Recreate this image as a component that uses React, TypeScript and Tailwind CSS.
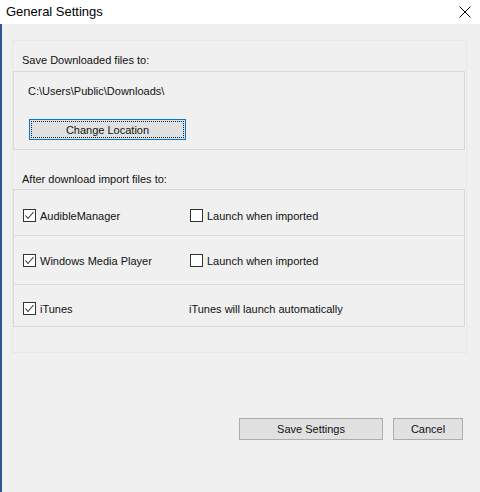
import React from "react";

function Check({ checked }: { checked: boolean }) {
  return (
    <div className="w-[13px] h-[13px] border border-[#333333] bg-white flex items-center justify-center shrink-0">
      {checked && (
        <svg width="11" height="11" viewBox="0 0 11 11">
          <polyline points="1.5,5.5 4,8.5 9.5,2" fill="none" stroke="#333333" strokeWidth="1.1" />
        </svg>
      )}
    </div>
  );
}

function Row({ pt, h, name, checked, right, last }: { pt: string; h: string; name: string; checked: boolean; right: React.ReactNode; last?: boolean }) {
  return (
    <div className={`${h} ${pt} ${last ? "" : "border-b border-[#dcdcdc]"} flex`}>
      <div className="flex items-center h-[13px] pl-[9px] w-[176px]">
        <Check checked={checked} />
        <span className="ml-[4px] leading-[16px]">{name}</span>
      </div>
      <div className="flex items-center h-[13px]">{right}</div>
    </div>
  );
}

export default function App() {
  return (
    <div
      className="w-[480px] h-[492px] flex flex-col text-[11px] text-[#111111] overflow-hidden"
      style={{ fontFamily: '"Liberation Sans", Arial, sans-serif' }}
    >
      <div className="h-[24px] bg-white flex items-center justify-between pl-[6px] pr-[9px] shrink-0">
        <span className="text-[13px] leading-[20px] text-black">General Settings</span>
        <svg width="12" height="12" viewBox="0 0 12 12">
          <path d="M0.5 0.5 L11.5 11.5 M11.5 0.5 L0.5 11.5" stroke="#000" strokeWidth="1" />
        </svg>
      </div>
      <div className="flex-1 bg-[#f0f0f0] border-l-2 border-[#2b5797] pl-[10px] pr-[16px] pt-[16px]">
        <div className="w-[455px] border border-[#e8e8e8] pr-[1px] pb-[25px]">
          <div className="pt-[11px] pl-[9px] h-[27px] leading-[16px]">Save Downloaded files to:</div>
          <div className="mt-[3px] h-[79px] border border-[#dadada] pl-[14px] pt-[11px]">
            <div className="leading-[16px]">C:\Users\Public\Downloads\</div>
            <div className="mt-[20px] ml-[1px] w-[157px] h-[21px] border border-[#0078d7] bg-[#e1e1e1] p-[1px]">
              <div className="w-full h-full border border-dotted border-[#222222] flex items-center justify-center leading-[16px]">
                Change Location
              </div>
            </div>
          </div>
          <div className="mt-[21px] pl-[9px] h-[16px] leading-[16px]">After download import files to:</div>
          <div className="mt-[2px] border border-[#dadada]">
            <Row
              h="h-[46px]"
              pt="pt-[19px]"
              name="AudibleManager"
              checked
              right={
                <>
                  <Check checked={false} />
                  <span className="ml-[4px] leading-[16px]">Launch when imported</span>
                </>
              }
            />
            <Row
              h="h-[49px]"
              pt="pt-[18px]"
              name="Windows Media Player"
              checked
              right={
                <>
                  <Check checked={false} />
                  <span className="ml-[4px] leading-[16px]">Launch when imported</span>
                </>
              }
            />
            <Row
              h="h-[41px]"
              pt="pt-[17px]"
              name="iTunes"
              checked
              last
              right={<span className="-ml-[1px] leading-[16px]">iTunes will launch automatically</span>}
            />
          </div>
        </div>
        <div className="mt-[65px] flex justify-end gap-[10px] pr-[1px]">
          <div className="w-[144px] h-[22px] border border-[#adadad] bg-[#e1e1e1] flex items-center justify-center leading-[16px]">
            Save Settings
          </div>
          <div className="w-[70px] h-[22px] border border-[#adadad] bg-[#e1e1e1] flex items-center justify-center leading-[16px]">
            Cancel
          </div>
        </div>
      </div>
    </div>
  );
}
